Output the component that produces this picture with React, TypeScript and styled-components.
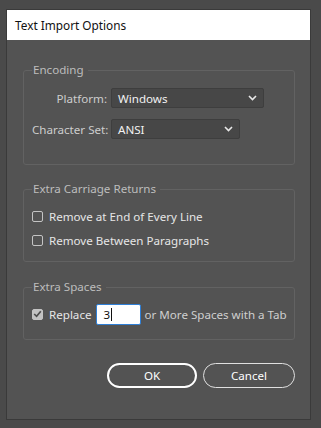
import { FC } from 'react'
import styled, { createGlobalStyle } from 'styled-components'

const GlobalStyle = createGlobalStyle`
  html, body {
    margin: 0;
    padding: 0;
    background: #4a4a4a;
    font-family: 'Noto Sans', 'Open Sans', sans-serif;
  }
`

const Page = styled('div')`
  width: 321px;
  height: 428px;
  padding: 10px 0 0 7px;
  box-sizing: border-box;
`

const Dialog = styled('div')`
  width: 303px;
  height: 409px;
  background: #535353;
  box-shadow: 0 0 0 1px #3a3a3a;
  display: flex;
  flex-direction: column;
`

const TitleBar = styled('div')`
  height: 30px;
  background: #fff;
  color: #111;
  font-size: 11.8px;
  display: flex;
  align-items: center;
  padding-left: 8px;
`

const Body = styled('div')`
  padding: 22px 15px 0 16px;
  display: flex;
  flex-direction: column;
  gap: 16px;
`

const Group = styled('fieldset')<{ $height: number; $offset?: number }>`
  margin: ${(p) => p.$offset ?? 0}px 0 0 0;
  padding: 0 0 0 8px;
  border: 1px solid #626262;
  border-radius: 3px;
  height: ${(p) => p.$height}px;
  box-sizing: border-box;
  min-width: 0;
`

const Legend = styled('legend')`
  padding: 0 4px 0 1px;
  margin-left: 0;
  color: #bdbdbd;
  font-size: 11.6px;
  line-height: 16px;
`

const FieldGrid = styled('div')`
  display: grid;
  grid-template-columns: 75px auto;
  column-gap: 4px;
  row-gap: 11px;
  align-items: center;
  margin-top: 10px;
`

const FieldLabel = styled('span')`
  color: #cdcdcd;
  font-size: 11.6px;
  text-align: right;
  white-space: nowrap;
`

const Select = styled('div')<{ $width: number }>`
  width: ${(p) => p.$width}px;
  height: 20px;
  box-sizing: border-box;
  background: #474747;
  border: 1px solid #3e3e3e;
  border-radius: 2px;
  display: flex;
  align-items: center;
  justify-content: space-between;
  padding: 0 6px 0 6px;
  color: #f2f2f2;
  font-size: 11.6px;
`

const CheckList = styled('div')`
  display: flex;
  flex-direction: column;
  gap: 8px;
  margin-top: 11px;
`

const CheckRow = styled('div')`
  display: flex;
  align-items: center;
  gap: 6px;
  color: #e6e6e6;
  font-size: 11.6px;
  height: 16px;
  white-space: nowrap;
`

const Box = styled('span')<{ $checked?: boolean }>`
  width: 11px;
  height: 11px;
  box-sizing: border-box;
  border: 1px solid #c4c4c4;
  border-radius: 2px;
  background: ${(p) => (p.$checked ? '#c2c2c2' : 'transparent')};
  display: flex;
  align-items: center;
  justify-content: center;
  flex-shrink: 0;
`

const NumberInput = styled('div')`
  width: 45px;
  height: 21px;
  box-sizing: border-box;
  background: #fff;
  border: 1px solid #2f7fd6;
  border-radius: 2px;
  color: #111;
  font-size: 11.6px;
  display: flex;
  align-items: center;
  padding-left: 6px;
  margin: 0 -3px 0 -1px;
`

const Caret = styled('span')`
  width: 1px;
  height: 13px;
  background: #111;
  margin-left: 1px;
`

const Muted = styled('span')`
  color: #cfcfcf;
`

const Buttons = styled('div')`
  display: flex;
  justify-content: flex-end;
  gap: 6px;
  padding: 23px 15px 0 0;
`

const Button = styled('div')<{ $primary?: boolean }>`
  width: ${(p) => (p.$primary ? 90 : 92)}px;
  height: 25px;
  box-sizing: border-box;
  border: ${(p) => (p.$primary ? '2px solid #fff' : '1.5px solid #e0e0e0')};
  border-radius: 13px;
  color: #fff;
  font-size: 11.6px;
  display: flex;
  align-items: center;
  justify-content: center;
`

const Chevron: FC = () => (
  <svg width="9" height="6" viewBox="0 0 9 6">
    <path d="M1 1 L4.5 4.5 L8 1" fill="none" stroke="#e8e8e8" strokeWidth="1.6" />
  </svg>
)

const Check: FC = () => (
  <svg width="9" height="8" viewBox="0 0 9 8">
    <path d="M1.2 4 L3.6 6.3 L7.8 1.3" fill="none" stroke="#4e4e4e" strokeWidth="1.7" />
  </svg>
)

const App: FC = () => (
  <>
    <GlobalStyle />
    <Page>
      <Dialog>
        <TitleBar>Text Import Options</TitleBar>
        <Body>
          <Group $height={103}>
            <Legend>Encoding</Legend>
            <FieldGrid>
              <FieldLabel>Platform:</FieldLabel>
              <Select $width={153}>
                Windows
                <Chevron />
              </Select>
              <FieldLabel>Character Set:</FieldLabel>
              <Select $width={129}>
                ANSI
                <Chevron />
              </Select>
            </FieldGrid>
          </Group>
          <Group $height={81}>
            <Legend>Extra Carriage Returns</Legend>
            <CheckList>
              <CheckRow>
                <Box />
                Remove at End of Every Line
              </CheckRow>
              <CheckRow>
                <Box />
                Remove Between Paragraphs
              </CheckRow>
            </CheckList>
          </Group>
          <Group $height={61} $offset={1}>
            <Legend>Extra Spaces</Legend>
            <CheckList>
              <CheckRow>
                <Box $checked>
                  <Check />
                </Box>
                Replace
                <NumberInput>
                  3<Caret />
                </NumberInput>
                <Muted>or More Spaces with a Tab</Muted>
              </CheckRow>
            </CheckList>
          </Group>
        </Body>
        <Buttons>
          <Button $primary>OK</Button>
          <Button>Cancel</Button>
        </Buttons>
      </Dialog>
    </Page>
  </>
)

export default App
